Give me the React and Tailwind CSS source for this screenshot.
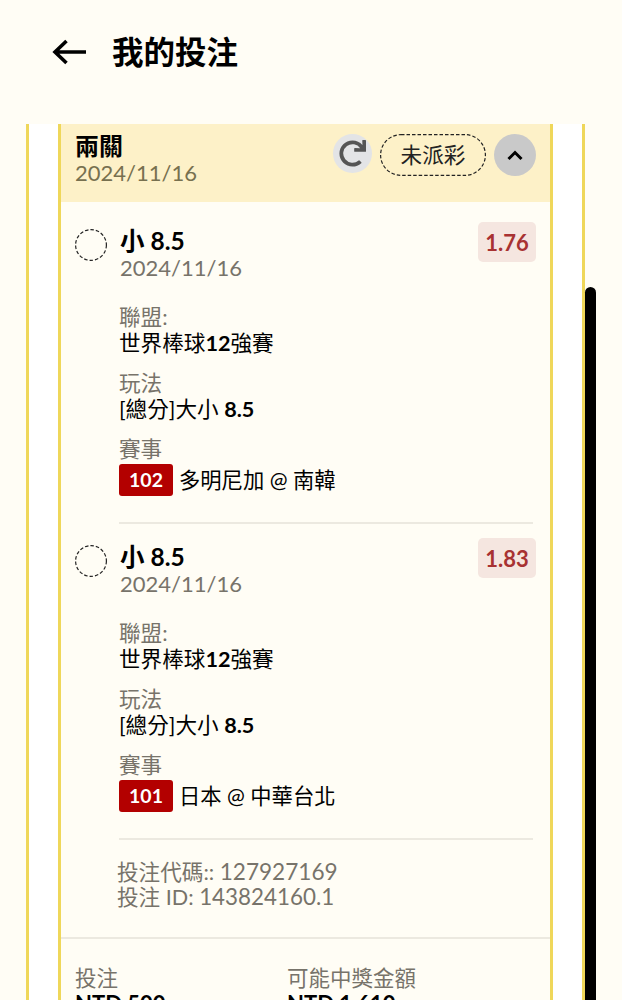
import { FaRedo } from 'react-icons/fa';

const font = { fontFamily: 'Lato, "Noto Sans CJK TC", sans-serif' };

function Leg({ odds, game, match }) {
  return (
    <div className="flex flex-col">
      <div className="flex items-start">
        <svg width="32" height="32" viewBox="0 0 32 32" fill="none" className="mt-[7px] shrink-0">
          <circle cx="16" cy="16" r="15.400" stroke="#222" strokeWidth="1.200" strokeDasharray="3.500 2" />
        </svg>
        <div className="ml-[13px] flex-1">
          <div className="text-[24.500px] leading-[28px] font-bold text-black mt-[5px]">小 8.5</div>
          <div className="text-[22px] leading-[26px] text-[#77736a]">2024/11/16</div>
        </div>
        <div className="w-[58px] h-[40px] rounded-[5px] bg-[#f5e6e0] text-[#a83232] text-[22px] font-bold flex items-center justify-center">{odds}</div>
      </div>
      <div className="ml-[44px] mt-[23px] text-[21.600px] leading-[26px]">
        <div className="text-[#77736a]">聯盟:</div>
        <div className="text-black">世界棒球<b>12</b>強賽</div>
        <div className="text-[#77736a] mt-[14px]">玩法</div>
        <div className="text-black">[總分]大小 <b>8.5</b></div>
        <div className="text-[#77736a] mt-[14px]">賽事</div>
        <div className="flex items-center mt-[2px] gap-[6px]">
          <span className="w-[54px] h-[32px] rounded-[3px] bg-[#b30000] text-white font-bold text-[19.500px] flex items-center justify-center">{game}</span>
          <span className="text-black text-[21.300px]">{match}</span>
        </div>
      </div>
    </div>
  );
}

export default function App() {
  return (
    <div className="relative w-[622px] h-[1000px] overflow-hidden bg-[#fffdf5]" style={font}>
      <div className="h-[124px] flex items-start pl-[52px] pt-[30px]">
        <svg width="36" height="28" viewBox="0 0 36 28" fill="none" stroke="#000" strokeWidth="3.600" className="mt-[8px]">
          <path d="M34 14H3M14.500 3L3 14l11.500 11" />
        </svg>
        <h1 className="ml-[24px] text-[31.500px] leading-[44px] font-bold text-black">我的投注</h1>
      </div>
      <div className="ml-[26px] w-[559px] border-x-[3px] border-[#efd75a] bg-white px-[29px] h-[876px]">
        <div className="border-x-[3px] border-[#efd75a] bg-[#fffdf5] h-full">
          <div className="h-[78px] bg-[#fdf1c8] flex items-start pl-[14px] pr-[14px]">
            <div className="flex-1 mt-[7px]">
              <div className="text-[24px] leading-[30px] font-bold text-black">兩關</div>
              <div className="text-[22px] leading-[24px] text-[#77704f]">2024/11/16</div>
            </div>
            <div className="w-[39px] h-[39px] mt-[10px] rounded-full bg-[#e3e4e6] flex items-center justify-center">
              <FaRedo size={27} color="#555" />
            </div>
            <div className="relative ml-[8px] mt-[10px] w-[106px] h-[42px] flex items-center justify-center text-[21.600px] text-[#222]">
              <svg width="106" height="42" viewBox="0 0 106 42" fill="none" className="absolute inset-0">
                <rect x="0.600" y="0.600" width="104.800" height="40.800" rx="20.400" stroke="#222" strokeWidth="1.200" strokeDasharray="3.500 2" />
              </svg>
              未派彩
            </div>
            <div className="ml-[8px] mt-[10px] w-[42px] h-[42px] rounded-full bg-[#c9c9c9] flex items-center justify-center">
              <svg width="18" height="12" viewBox="0 0 18 12" fill="none" stroke="#000" strokeWidth="3"><path d="M2.500 10L9 3.500l6.500 6.500" /></svg>
            </div>
          </div>
          <div className="pl-[14px] pr-[14px] pt-[20px]">
            <Leg odds="1.76" game="102" match="多明尼加 @ 南韓" />
            <div className="ml-[44px] mr-[3px] mt-[26px] h-[2px] bg-[#ece9e0]" />
            <div className="mt-[14px]"><Leg odds="1.83" game="101" match="日本 @ 中華台北" /></div>
            <div className="ml-[44px] mr-[3px] mt-[26px] h-[2px] bg-[#ece9e0]" />
            <div className="ml-[42px] mt-[20px] text-[21.600px] leading-[25px] text-[#77736a]">
              <div className="h-[25px]">投注代碼:: <span className="text-[22.600px] leading-none">127927169</span></div>
              <div className="h-[25px]">投注 ID: <span className="text-[22.400px] leading-none">143824160.1</span></div>
            </div>
          </div>
          <div className="mt-[27px] h-[2px] bg-[#ece9e0]" />
          <div className="pl-[14px] pt-[26px] flex text-[21.500px] leading-[26px]">
            <div className="w-[212px]">
              <div className="text-[#77736a]">投注</div>
              <div className="text-black font-bold text-[22px]">NTD 500</div>
            </div>
            <div>
              <div className="text-[#77736a]">可能中獎金額</div>
              <div className="text-black font-bold text-[22px]">NTD 1,610</div>
            </div>
          </div>
        </div>
      </div>
      <div className="absolute left-[585px] top-[287px] w-[11px] h-[713px] bg-black rounded-t-[6px]" />
    </div>
  );
}
